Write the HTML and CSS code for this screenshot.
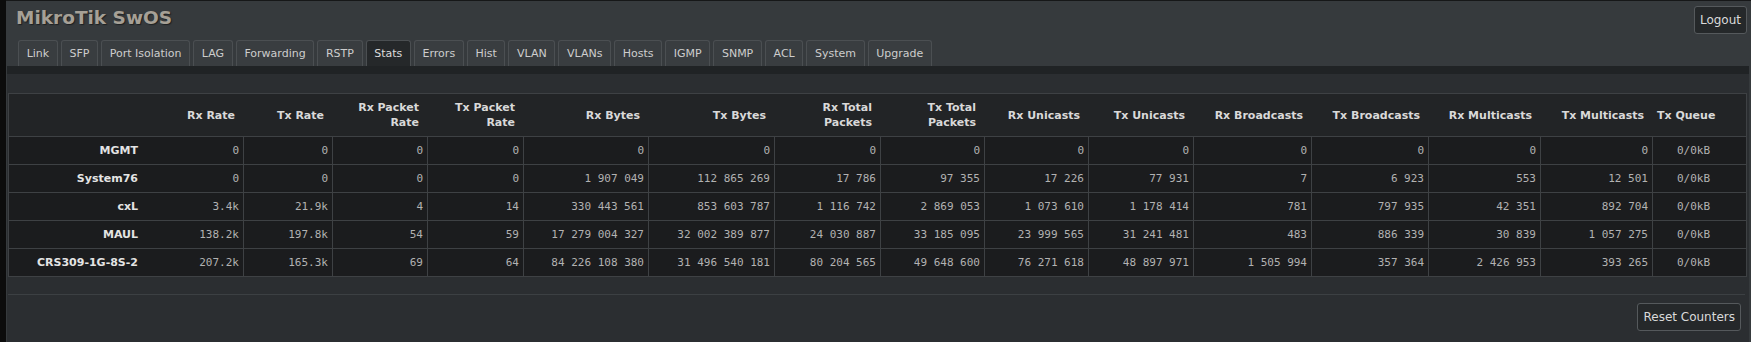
FILE: index.html
```html
<!DOCTYPE html>
<html lang="en">
  <head>
    <meta charset="UTF-8" />
    <meta name="viewport" content="width=device-width, initial-scale=1.0" />
    <title>MikroTik SwOS</title>
    <link rel="stylesheet" href="styles.css">
  </head>

  <body>
    <div class="page">
      <div class="header">
        <h1 class="title">MikroTik SwOS</h1>
        <button class="btn">Logout</button>
      </div>

      <ul class="tabs">
        <li>Link</li>
        <li>SFP</li>
        <li>Port Isolation</li>
        <li>LAG</li>
        <li>Forwarding</li>
        <li>RSTP</li>
        <li class="active">Stats</li>
        <li>Errors</li>
        <li>Hist</li>
        <li>VLAN</li>
        <li>VLANs</li>
        <li>Hosts</li>
        <li>IGMP</li>
        <li>SNMP</li>
        <li>ACL</li>
        <li>System</li>
        <li>Upgrade</li>
      </ul>

      <div class="panel">
        <table class="stats">
          <colgroup>
            <col style="width: 137px" />
            <col style="width: 97px" />
            <col style="width: 89px" />
            <col style="width: 95px" />
            <col style="width: 96px" />
            <col style="width: 125px" />
            <col style="width: 126px" />
            <col style="width: 106px" />
            <col style="width: 104px" />
            <col style="width: 104px" />
            <col style="width: 105px" />
            <col style="width: 118px" />
            <col style="width: 117px" />
            <col style="width: 112px" />
            <col style="width: 112px" />
            <col style="width: 94px" />
          </colgroup>
          <thead>
            <tr>
              <th></th>
              <th>Rx Rate</th>
              <th>Tx Rate</th>
              <th>Rx Packet<br />Rate</th>
              <th>Tx Packet<br />Rate</th>
              <th>Rx Bytes</th>
              <th>Tx Bytes</th>
              <th>Rx Total<br />Packets</th>
              <th>Tx Total<br />Packets</th>
              <th>Rx Unicasts</th>
              <th>Tx Unicasts</th>
              <th>Rx Broadcasts</th>
              <th>Tx Broadcasts</th>
              <th>Rx Multicasts</th>
              <th>Tx Multicasts</th>
              <th class="queue">Tx Queue</th>
            </tr>
          </thead>
          <tbody>
            <tr>
              <th>MGMT</th>
              <td>0</td><td>0</td><td>0</td><td>0</td>
              <td>0</td><td>0</td><td>0</td><td>0</td>
              <td>0</td><td>0</td><td>0</td><td>0</td>
              <td>0</td><td>0</td><td class="queue">0/0kB</td>
            </tr>
            <tr>
              <th>System76</th>
              <td>0</td><td>0</td><td>0</td><td>0</td>
              <td>1 907 049</td><td>112 865 269</td><td>17 786</td><td>97 355</td>
              <td>17 226</td><td>77 931</td><td>7</td><td>6 923</td>
              <td>553</td><td>12 501</td><td class="queue">0/0kB</td>
            </tr>
            <tr>
              <th>cxL</th>
              <td>3.4k</td><td>21.9k</td><td>4</td><td>14</td>
              <td>330 443 561</td><td>853 603 787</td><td>1 116 742</td><td>2 869 053</td>
              <td>1 073 610</td><td>1 178 414</td><td>781</td><td>797 935</td>
              <td>42 351</td><td>892 704</td><td class="queue">0/0kB</td>
            </tr>
            <tr>
              <th>MAUL</th>
              <td>138.2k</td><td>197.8k</td><td>54</td><td>59</td>
              <td>17 279 004 327</td><td>32 002 389 877</td><td>24 030 887</td><td>33 185 095</td>
              <td>23 999 565</td><td>31 241 481</td><td>483</td><td>886 339</td>
              <td>30 839</td><td>1 057 275</td><td class="queue">0/0kB</td>
            </tr>
            <tr>
              <th>CRS309-1G-8S-2</th>
              <td>207.2k</td><td>165.3k</td><td>69</td><td>64</td>
              <td>84 226 108 380</td><td>31 496 540 181</td><td>80 204 565</td><td>49 648 600</td>
              <td>76 271 618</td><td>48 897 971</td><td>1 505 994</td><td>357 364</td>
              <td>2 426 953</td><td>393 265</td><td class="queue">0/0kB</td>
            </tr>
          </tbody>
        </table>

        <div class="actions">
          <button class="btn">Reset Counters</button>
        </div>
      </div>
    </div>
  </body>
</html>
```

FILE: styles.css
```css
* {
  margin: 0;
  padding: 0;
  box-sizing: border-box;
}

html,
body {
  height: 100%;
}

body {
  background-color: #0c0c0c;
  font-family: "DejaVu Sans", Verdana, sans-serif;
  font-size: 11px;
  color: #d0d0d0;
  overflow: hidden;
}

.page {
  height: 100%;
  margin-left: 6px;
  border-top: 1px solid #161718;
  background-color: #363a3d;
  display: flex;
  flex-direction: column;
}

.header {
  height: 39px;
  display: flex;
  justify-content: space-between;
  align-items: flex-start;
  padding: 5px 4px 0 10px;
}

.title {
  margin-top: 1px;
  font-size: 18.5px;
  line-height: 22px;
  font-weight: bold;
  color: #a6a096;
  text-shadow: 1px 1px 1px #1e2022;
}

.btn {
  height: 28px;
  padding: 0 5px;
  font-family: "DejaVu Sans", Verdana, sans-serif;
  font-size: 12px;
  color: #dadada;
  background-color: #25282a;
  border: 1px solid #55595c;
  border-radius: 3px;
}

.tabs {
  list-style: none;
  display: flex;
  gap: 3px;
  padding-left: 12px;
  height: 26px;
}

.tabs li {
  height: 26px;
  line-height: 25px;
  padding: 0 7.65px;
  background-color: #393d40;
  border: 1px solid #4b4f52;
  border-bottom: none;
  border-radius: 3px 3px 0 0;
  color: #cdcdcd;
}

.tabs li.active {
  background-color: #25282a;
  color: #dcdcdc;
}

.panel {
  flex: 1;
  margin: 0 2px 0 1px;
  padding: 19px 2px 0 1px;
  border-top: 8px solid #202325;
  background-color: #2b2e31;
}

.stats {
  width: 100%;
  table-layout: fixed;
  border-collapse: separate;
  border-spacing: 0;
  border: 1px solid #3e4144;
  background-color: #1b1c1e;
}

.stats th,
.stats td {
  white-space: nowrap;
  text-align: right;
  vertical-align: middle;
}

.stats thead tr {
  height: 43px;
}

.stats thead th {
  padding: 0 8px;
  line-height: 15px;
  font-weight: bold;
  color: #d9d9d9;
  background-color: #222426;
  border-bottom: 1px solid #3e4144;
}

.stats thead th.queue {
  text-align: left;
  padding-left: 5px;
}

.stats tbody tr {
  height: 28px;
}

.stats tbody tr:first-child {
  height: 27px;
}

.stats tbody tr + tr > * {
  border-top: 1px solid #3e4144;
}

.stats tbody th {
  padding: 0 8px;
  font-weight: bold;
  color: #e4e4e4;
}

.stats tbody td {
  padding: 0 4px;
  font-family: "DejaVu Sans Mono", monospace;
  font-size: 11px;
  color: #b2b2b2;
}

.stats tbody td + td {
  border-left: 1px solid #3e4144;
}

.stats tbody td.queue {
  text-align: left;
  padding-left: 24px;
}

.actions {
  margin: 17px 2px 0 0;
  padding: 8px 4px 0 0;
  border-top: 1px solid #3c4043;
  display: flex;
  justify-content: flex-end;
}
```
